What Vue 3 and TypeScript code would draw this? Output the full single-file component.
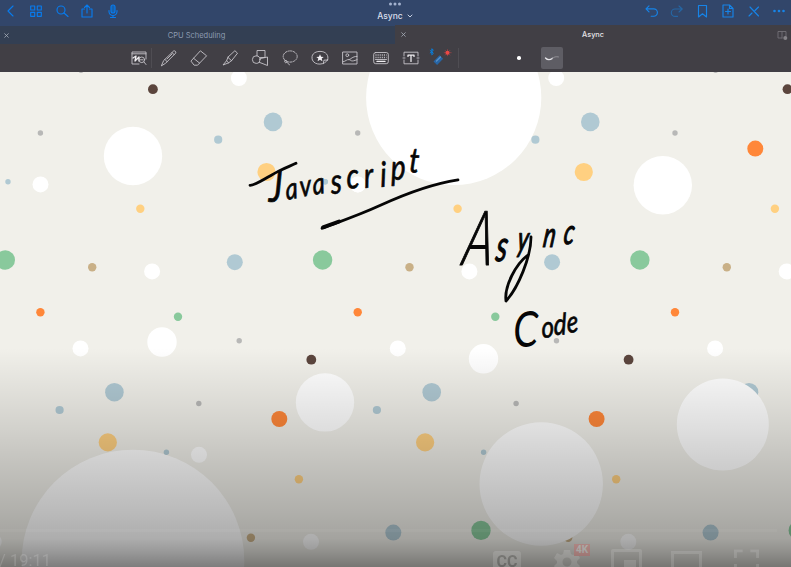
<script setup lang="ts">
type Dot = [x: number, y: number, r: number, tone: string]

const PERIOD = 317.3

const repeated: Dot[] = [
  [81, 70.2, 2.7, 'grey'], [40.4, 133, 2.7, 'grey'], [-118.5, 403.5, 2.7, 'grey'], [239.2, 340.7, 2.7, 'grey'],
  [-164.4, 89.2, 4.9, 'brown'], [-6, 359.7, 4.9, 'brown'],
  [-78.4, 78, 8, 'white'], [40.5, 184.4, 8, 'white'], [152.1, 271.4, 8, 'white'], [80.5, 348.4, 8, 'white'],
  [-118.3, 454.8, 8, 'white'], [-6.3, 541.8, 8, 'white'],
  [-44.3, 121.9, 9.3, 'blue'], [8, 181.8, 2.7, 'blue'], [-82.5, 262.2, 8, 'blue'],
  [114.4, 392.2, 9.3, 'blue'], [59.6, 410, 4.1, 'blue'], [76, 532.6, 8, 'blue'],
  [-50.8, 172, 9.1, 'yellow'], [140.3, 208.7, 4.2, 'yellow'], [107.8, 442.4, 9.1, 'yellow'], [-18.4, 479.2, 4.2, 'yellow'],
  [120.7, 148.6, 8, 'orange'], [-38, 419, 8, 'orange'], [40.4, 312.3, 4.2, 'orange'],
  [5.3, 260, 9.7, 'green'], [178, 316.7, 4.2, 'green'],
  [92.2, 267.2, 4.2, 'tan'], [-66.4, 537.8, 4.2, 'tan'],
]

const discs: Dot[] = [
  [133, 156, 29.2, 'white'], [453.7, 97.5, 87.6, 'white'], [662.8, 185.2, 29.2, 'white'],
  [162, 342, 14.7, 'white'], [483.5, 358.8, 14.7, 'white'], [325, 402.4, 29.2, 'white'],
  [722.8, 424.6, 46, 'white'], [541.2, 484, 61.7, 'white'], [133, 561, 111.3, 'white'],
]

const front: Dot[] = [
  [218.2, 139.7, 4.1, 'blue'], [535.4, 139.7, 4.1, 'blue'], [325.2, 181.8, 2.7, 'blue'],
  [357.8, 184.4, 8, 'white'], [166.4, 452.2, 2.7, 'blue'], [483.6, 452.2, 2.7, 'blue'],
  [481, 530.4, 9.7, 'green'], [798.3, 530.4, 9.7, 'green'],
]

const spread = (list: Dot[]): Dot[] =>
  list.flatMap(([x, y, r, t]) => [0, 1, 2, 3].map((k): Dot => [x + k * PERIOD, y, r, t]))

// Lone dots hidden by neighbouring artwork in the first column of the print.
const hidden = (d: Dot) => d[3] === 'orange' && d[0] < 130 && d[1] < 160
const dots: Dot[] = [...spread(repeated).filter((d) => !hidden(d)), ...discs, ...front]
</script>

<template>
  <main class="app">
    <header class="nav">
      <div class="group">
        <svg viewBox="0 0 16 16"><path d="M10 3 5 8l5 5" /></svg>
        <svg viewBox="0 0 16 16"><path d="M2.7 3h4v4h-4zM9.3 3h4v4h-4zM2.7 9.3h4v4h-4zM9.3 9.3h4v4h-4z" /></svg>
        <svg viewBox="0 0 16 16"><circle cx="7" cy="7" r="4" /><path d="m10 10 4 3.5" /></svg>
        <svg viewBox="0 0 16 16"><path d="M5.5 6H3v8h10V6h-2.5M8 10V2M5.5 4.5 8 2l2.5 2.5" /></svg>
        <svg viewBox="0 0 16 16"><rect x="6" y="2" width="4" height="8" rx="2" class="tint" /><path d="M4 7.5v1a4 4 0 0 0 8 0v-1M8 12.5v2M5.5 14.5h5" /></svg>
      </div>
      <div class="title">
        <svg class="grip" viewBox="0 0 14 4"><circle cx="2.5" cy="2" r="1.5" /><circle cx="7" cy="2" r="1.5" /><circle cx="11.5" cy="2" r="1.5" /></svg>
        <div class="name">Async <svg viewBox="0 0 6 4"><path d="m1 1 2 2 2-2" /></svg></div>
      </div>
      <div class="group right">
        <svg viewBox="0 0 16 16"><path d="M5 2.8 2 5.8 5 8.8M2.3 5.8h7.4a3.6 3.6 0 0 1 0 7.4H7.2" /></svg>
        <svg viewBox="0 0 16 16" class="dim"><path d="m10 3 3.2 3L10 9M13 6H6a3.6 3.6 0 0 0 0 7.4h2.5" /></svg>
        <svg viewBox="0 0 16 16"><path d="M3.5 2.5h8v11.5l-4-3.2-4 3.2z" /></svg>
        <svg viewBox="0 0 16 16"><path d="M3 2h6.5L13 5.5V14H3zM9.5 2v3.5H13M8 6v5M5.5 8.5h5" /></svg>
        <svg viewBox="0 0 16 16"><path d="m4 4 8.5 9M3 13l3-3M9 7.5 12.5 4" /></svg>
        <svg viewBox="0 0 16 16" class="dots"><circle cx="3.5" cy="8" r="1.3" /><circle cx="8" cy="8" r="1.3" /><circle cx="12.5" cy="8" r="1.3" /></svg>
      </div>
    </header>

    <nav class="tabs">
      <div class="tab"><svg class="close" viewBox="0 0 5 5"><path d="m.7.7 3.6 3.6m0-3.6L.7 4.3" /></svg><span>CPU Scheduling</span></div>
      <div class="tab active"><svg class="close" viewBox="0 0 5 5"><path d="m.7.7 3.6 3.6m0-3.6L.7 4.3" /></svg><span>Async</span>
        <svg class="split" viewBox="0 0 12 10"><path d="M6 8H2V1.5h8V6M6 1.5V8" /><circle cx="9.3" cy="8" r="2" /></svg>
      </div>
    </nav>

    <section class="tools">
      <div class="toolset">
        <svg viewBox="0 0 18 18"><path d="M9 15H2V3h14v7M2 4.8h14" /><path class="bold" d="m3 9 3-2-1 5 4-4v4" /><circle cx="11.8" cy="10.8" r="2.8" /><path d="m14 13 2 2.5M10.5 10.8h2.5" /></svg>
        <svg viewBox="0 0 18 18"><path d="m1.5 16.5 2.2-5L13.6 2c.9-.7 2.9.7 2.1 2.1L5.9 14zM5 10.5 7.2 12.8M12 3.5l2.3 2.3" /><path d="m7 10 5-5" /></svg>
        <svg viewBox="0 0 18 18"><path d="m1.2 11.8 9.2-10 6.2 5-9 9.4H4.5zM3.6 9.3l6 4.8" /></svg>
        <svg viewBox="0 0 18 18"><path d="m7.1 8 6.8-6.3 2.6 2.5-5.7 7.2zM7.1 8l-1.6 3.8 2.2 2 3.1-2.4M5.5 11.8 2 16l5.7-2.2" /></svg>
        <svg viewBox="0 0 18 18"><path d="M6 7V1.5h8v7H9.5" /><circle cx="5.2" cy="10.6" r="3.8" /><path d="M9.5 9.5 16.5 8v8.5l-8.2-3.2" /></svg>
        <svg viewBox="0 0 18 18"><ellipse cx="9.2" cy="7.5" rx="7" ry="5.6" stroke-dasharray="1.5 1.2" /><path d="M4 11.5c-1 1.5.4 3 1.7 1.8S5 11 4 11.5m2 1.8c.7 1 1.4 1.9 2.5 2.5" /></svg>
        <svg viewBox="0 0 18 18"><path d="M16.5 11C14 16 4 17 1.4 11-.2 6 3 2.5 9 2.4S18.3 6.7 16.5 11zm0 0-3.6.2-.6 3.5" /><path class="solid" d="m9 5.3 1.1 2.4 2.6.2-2 1.7.7 2.6L9 10.8l-2.4 1.4.7-2.6-2-1.7 2.6-.2z" /></svg>
        <svg viewBox="0 0 18 18"><path d="M2 3h14v12H2zM2 12.8c3-.5 3.7-2.6 6-2.2s1.5 2.8 8 .1M8 10.6c2-.1 3-3.2 8-3.2" /><circle cx="6.3" cy="6.2" r="1.4" /></svg>
        <svg viewBox="0 0 18 18"><rect x="1.7" y="3.5" width="14.6" height="11.2" rx="2" /><path class="keys" d="M3.5 6h11M3.5 8.5h11" /><path d="M3.5 10.5h11" /><path class="bold" d="M5 12.4h8" /></svg>
        <svg viewBox="0 0 18 18"><path d="M2 7V3.2h14V7M2 11v3.8h14V11M1 9h2M15 9h2" /><path class="bold" d="M6 6.2h6M9 6.2v6.2M6 6.2v1.2m6-1.2v1.2" /></svg>
        <svg class="laser" viewBox="0 0 24 20"><path class="bt" d="m1.2 2.5 3.2 2.8-1.6 1.5V.7l1.6 1.5L1.2 5" /><path class="beam" d="m6.3 15.2 6-6.2" /><path class="shine" d="m7.5 13 4-4" /><path class="ray" d="M18.5 1.7v6M15.2 4.7h7M16.3 2.5l4.5 4.5M20.8 2.5 16.3 7" /><circle cx="18.5" cy="4.8" r="2" /></svg>
      </div>
      <i class="rule first"></i><i class="rule"></i><i class="tip"></i>
      <div class="stroke"><svg viewBox="0 0 18 12"><path d="M2.5 6c3 3.3 6 1 7 .3" /><path class="fade" d="M9 6.5c2-1.7 4-2.1 6.5-1.6" /></svg></div>
    </section>

    <section class="page">
      <svg class="art" viewBox="0 72 791 495">
        <circle v-for="(d, i) in dots" :key="i" :cx="d[0]" :cy="d[1]" :r="d[2]" :class="d[3]" />
        <g class="ink">
          <text transform="translate(264 202) scale(.8 1)" x="6 28 46 62 84 104 126 146 159 181" y="0 -2 -5 -7 -8 -13 -14 -15 -22 -30" rotate="0 -8 -8 -8 -4 -6 -6 -4 -3 4"><tspan class="tall">J</tspan><tspan class="low">ava</tspan><tspan class="mid">script</tspan></text>
          <text class="heavy" transform="translate(461 265) skewX(-8) scale(.65 1)" x="0 51 82 121 152" y="0 -4 -14 -18 -21" rotate="0"><tspan class="cap">A</tspan><tspan class="large">s</tspan><tspan class="mid">ync</tspan></text>
          <text transform="translate(514 347) scale(.8 1)" x="-1 35 50 67" y="0 -9 -12 -14" rotate="0 -4 -2 -6"><tspan class="cap code">C</tspan><tspan class="low">ode</tspan></text>
          <path d="M250 185.3c6 .2 18-9 29-14.4 7-3.4 12-5.2 17-7.6" />
          <path d="M322 228.3c16-6 35-12.2 59-23.2 27-12.4 50-21 77-25.2" />
          <path class="swell" d="m323 227.3 16-5.8" />
          <path d="M531 237c0 20-13 51-25 64-2-15 10-37 22-46" />
        </g>
      </svg>
      <div class="shade"></div>
      <footer class="player">
        <div class="progress"></div>
        <div class="controls">
          <span class="time">/ 19:11</span>
          <div class="buttons">
            <b class="cc">CC</b>
            <div class="gear"><svg viewBox="0 0 26 26"><path fill-rule="evenodd" d="M10 1h6l1 4 2 1 4-2 3 5-3 3v2l3 3-3 5-4-1-2 1-1 4h-6l-1-4-2-1-4 1-3-5 3-3v-2L0 9l3-5 4 2 2-1zm3 7.5a4.5 4.5 0 1 0 0 9 4.5 4.5 0 0 0 0-9" /></svg><b>4K</b></div>
            <div class="mini"><i></i></div>
            <div class="wide"></div>
            <svg class="full" viewBox="0 0 26 24"><path d="M1.5 9V1.5H9M17 1.5h7.5V9M1.5 15v7.5H9M17 22.5h7.5V15" /></svg>
          </div>
        </div>
      </footer>
    </section>
  </main>
</template>

<style>
body { margin: 0; overflow: hidden; }
</style>

<style scoped>
.app { width: 791px; height: 567px; overflow: hidden; display: flex; flex-direction: column; background: #413f45; font-family: Inter, "Liberation Sans", sans-serif; }
svg { display: block; fill: none; stroke-linecap: round; stroke-linejoin: round; flex: none; }
.nav { height: 26px; box-sizing: border-box; background: #32466a; display: grid; grid-template-columns: 1fr auto 1fr; flex: none; }
.group { display: flex; gap: 9.6px; padding: 2.5px 0 0 2.5px; }
.group svg { width: 16px; height: 16px; stroke: #087bed; stroke-width: 1.15; }
.group.right { justify-content: flex-end; gap: 9.4px; padding-right: 4px; }
.group.right svg { stroke: #1684e8; }
.group.right .dim { stroke: #2566a4; }
.group .tint { fill: #1761ad; }
.group.right .dots { fill: #1684e8; stroke: none; }
.title { display: flex; flex-direction: column; align-items: center; padding-top: 2px; color: #d9dfeb; font-size: 8.5px; line-height: 12px; font-weight: 500; }
.grip { width: 14px; height: 4px; fill: #a3b2cf; }
.name { display: flex; gap: 4px; align-items: center; padding-top: 4px; margin-left: -1px; }
.name svg { width: 6px; height: 4px; stroke: #c8d1e1; stroke-width: 1; }
.tabs { height: 18px; display: grid; grid-template-columns: 395px 396px; flex: none; }
.tab { background: #333f53; color: #8d9bb1; display: grid; grid-template-columns: 12px 1fr 14px; align-items: center; font-size: 7.5px; line-height: 17px; text-align: center; }
.tab.active { background: #413f45; color: #e5e4e6; font-size: 7.3px; font-weight: 500; margin-top: -1px; grid-template-columns: 12px 1fr 12px; }
.close { width: 5px; height: 5px; stroke: #a6adb8; stroke-width: .8; justify-self: end; margin-right: 3px; }
.active .close { margin-right: 1px; }
.split { width: 12px; height: 10px; stroke: #737176; stroke-width: .9; margin-left: -3px; }
.split circle { fill: #858388; stroke: none; }
.tools { height: 28px; flex: none; display: flex; align-items: center; background: #413f45; }
.toolset { display: flex; gap: 12.2px; padding-left: 130px; width: 329px; }
.toolset svg { width: 18px; height: 18px; stroke: #c6c4c9; stroke-width: .9; }
.toolset .bold { stroke: #efedf0; stroke-width: 1.3; }
.toolset .solid { fill: #f2f0f4; stroke: none; }
.toolset .keys { stroke-width: 1.6; stroke-dasharray: 1 1.1; stroke-linecap: butt; }
.toolset .laser { width: 24px; height: 20px; margin-top: -1px; margin-left: -3px; }
.laser .bt { stroke: #087edc; stroke-width: 1; }
.laser .beam { stroke: #2765a5; stroke-width: 5; stroke-linecap: butt; }
.laser .shine { stroke: #5b91c6; stroke-width: 1.2; }
.laser .ray { stroke: #b94444; stroke-width: .6; }
.laser circle { fill: #ee4845; stroke: none; }
.rule { width: 1px; height: 20px; background: #4f4d53; }
.rule.first { margin-left: -308px; margin-right: 306px; }
.tip { width: 3.5px; height: 3.5px; border-radius: 50%; background: #fff; margin-left: 58px; }
.stroke { width: 22px; height: 22px; border-radius: 2px; background: #5e5d64; margin-left: 20.5px; display: grid; place-items: center; }
.stroke svg { width: 18px; height: 12px; stroke: #e6e5e9; stroke-width: 1.3; }
.stroke .fade { stroke: #96959b; stroke-width: .9; }
.page { position: relative; height: 495px; background: #f1f0ea; overflow: hidden; }
.art { width: 791px; height: 495px; }
.white { fill: #fff; } .blue { fill: #b0c9d3; } .yellow { fill: #ffd081; } .orange { fill: #ff8739; }
.green { fill: #89c99c; } .tan { fill: #c9b087; } .brown { fill: #5b453d; } .grey { fill: #b8b8b7; }
.ink text { font: italic 400 29px Lato, sans-serif; fill: #060606; stroke: #060606; stroke-width: .7; }
.ink text.heavy { stroke-width: 1.2; }
.ink .tall { font-size: 43px; }
.ink .low { font-size: 30px; }
.ink .mid { font-size: 35px; }
.ink .large { font-size: 43px; }
.ink .cap { font-size: 76px; font-weight: 300; }
.ink .cap.code { font-size: 50px; font-weight: 400; stroke-width: 0; }
.ink path { stroke: #060606; stroke-width: 2.8; }
.ink .swell { stroke-width: 3.8; }
.shade { position: absolute; inset: 276px 0 0; background: linear-gradient(to bottom, transparent 0, rgba(0,0,0,.04) 11%, rgba(0,0,0,.13) 37%, rgba(0,0,0,.19) 52%, rgba(0,0,0,.27) 75%, rgba(0,0,0,.32) 87%, rgba(0,0,0,.4) 93%, rgba(0,0,0,.51) 100%); }
.player { position: absolute; inset: 457px 0 0; }
.progress { height: 3px; margin: 0 14px 0 0; background: rgba(255,255,255,.04); }
.controls { display: flex; justify-content: space-between; padding: 13px 32px 0 0; opacity: .18; color: #eee; }
.time { font: 16.5px/20px Roboto, sans-serif; padding-top: 6px; margin-left: -1px; }
.buttons { display: flex; align-items: flex-start; }
.cc { box-sizing: border-box; width: 28px; height: 24px; margin-top: 6px; border-radius: 3px; background: #ddd; color: #222; font: 700 16px/22px Roboto, sans-serif; text-align: center; }
.gear { position: relative; width: 26px; margin: 4px 0 0 33px; }
.gear svg { width: 26px; height: 26px; fill: #ddd; }
.gear b { position: absolute; left: 20px; top: -5px; width: 16px; height: 12px; background: #f22; color: #fff; font: 700 10px/12px Roboto, sans-serif; text-align: center; }
.mini { box-sizing: border-box; width: 31px; height: 26px; border: 3px solid #ddd; border-radius: 2px; margin: 4px 0 0 31px; }
.mini i { display: block; width: 12px; height: 9px; background: #ddd; margin: 8px 0 0 10px; }
.wide { box-sizing: border-box; width: 31px; height: 24px; border: 3px solid #ddd; margin: 6px 0 0 29px; }
.full { width: 25px; height: 24px; margin: 4px 0 0 32px; stroke: #ddd; stroke-width: 3; stroke-linecap: butt; stroke-linejoin: miter; }
</style>
